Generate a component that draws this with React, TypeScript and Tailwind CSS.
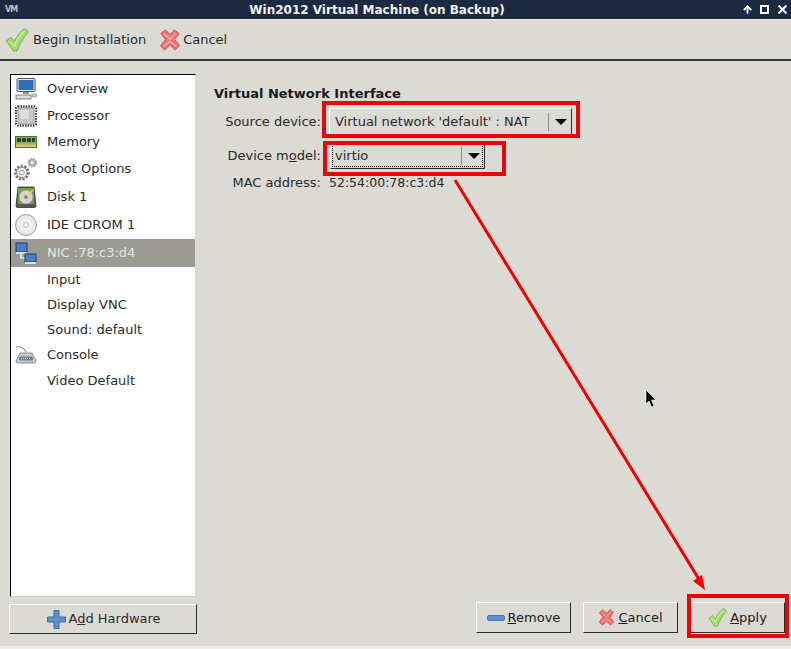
import { ReactNode } from "react";
import { ArrowUp, X } from "lucide-react";

const font = "font-['DejaVu_Sans',sans-serif]";

const CheckIcon = ({ size = 24 }: { size?: number }) => (
    <svg width={size} height={size} viewBox="0 0 24 24">
        <path d="M1 13 L6 9.5 L9.5 13 C12 8 15 4 19.5 0.5 L23.5 4 C18 10 14.5 16 12 23 L8 23 C6 19 3.5 16 1 13 Z" fill="#a2dc6c" stroke="#74b04f" strokeWidth="1" strokeLinejoin="round" />
        <path d="M4 13.5 L9.5 17.5 C12 11 15.5 6.5 20 3" fill="none" stroke="#c8ef9f" strokeWidth="1.4" />
    </svg>
);

const CrossIcon = ({ size = 22 }: { size?: number }) => (
    <svg width={size} height={size} viewBox="0 0 24 24">
        <path d="M2 5 L7 1 L12 6 L17 1 L22 5 L17 11.5 L22.5 18 L17.5 23 L12 17 L6.5 23 L1.5 18.5 L7 11.5 Z" fill="#ec7373" stroke="#c94a4a" strokeWidth="1" strokeLinejoin="round" />
        <path d="M5 5 L12 11 L18 5 M5 19 L12 13.5 L19 19" fill="none" stroke="#f7b0b0" strokeWidth="1.4" />
    </svg>
);

const MonitorIcon = () => (
    <svg width="22" height="22" viewBox="0 0 22 22">
        <rect x="2" y="0.5" width="18" height="13" rx="1" fill="#e8e8e8" stroke="#555" />
        <rect x="3.5" y="2" width="15" height="10" fill="#2f6fb8" />
        <rect x="8" y="14" width="6" height="2" fill="#999" />
        <rect x="1" y="17" width="15" height="4" fill="#ddd" stroke="#666" strokeWidth="0.8" />
        <rect x="17" y="16" width="5" height="3" rx="1" fill="#ccc" stroke="#777" strokeWidth="0.6" />
    </svg>
);

const ChipIcon = () => (
    <svg width="22" height="24" viewBox="0 0 22 24">
        <rect x="1" y="2.5" width="20" height="19" rx="2" fill="none" stroke="#333" strokeWidth="2.4" strokeDasharray="1.4 1.2" />
        <rect x="3" y="4" width="16" height="16" rx="1" fill="#c8c8c6" stroke="#777" strokeWidth="0.6" />
        <rect x="5" y="6" width="9" height="9" fill="#dededc" />
    </svg>
);

const MemoryIcon = () => (
    <svg width="22" height="12" viewBox="0 0 22 12">
        <rect x="0.5" y="0.5" width="21" height="11" fill="#8fae6a" stroke="#4f6b3a" />
        <rect x="2" y="2" width="4" height="4" fill="#2f3f28" />
        <rect x="7" y="2" width="4" height="4" fill="#2f3f28" />
        <rect x="12" y="2" width="4" height="4" fill="#2f3f28" />
        <rect x="17" y="2" width="3" height="4" fill="#2f3f28" />
        <rect x="1" y="8.5" width="20" height="2.5" fill="#d9c66a" />
    </svg>
);

const GearsIcon = () => (
    <svg width="25" height="25" viewBox="0 0 24 24">
        <circle cx="8.5" cy="15" r="6" fill="#f2f2f0" stroke="#777" strokeWidth="3" strokeDasharray="2 1.3" />
        <circle cx="8.5" cy="15" r="5" fill="#f4f4f2" stroke="#777" strokeWidth="0.8" />
        <circle cx="8.5" cy="15" r="2.2" fill="#fff" stroke="#777" strokeWidth="0.8" />
        <circle cx="18.5" cy="5.5" r="3.6" fill="#bbb" stroke="#999" strokeWidth="2" strokeDasharray="1.5 1" />
        <circle cx="18.5" cy="5.5" r="1.4" fill="#eee" />
    </svg>
);

const DiskIcon = () => (
    <svg width="22" height="22" viewBox="0 0 22 22">
        <path d="M3 1 H19 L21 20 Q21 21.5 19.5 21.5 H2.5 Q1 21.5 1 20 Z" fill="#555753" stroke="#333" strokeWidth="0.8" />
        <rect x="3" y="2" width="16" height="16" rx="1" fill="#7ba23f" />
        <circle cx="11" cy="11" r="7" fill="#d5d5d0" stroke="#8a8a85" strokeWidth="0.6" />
        <circle cx="11" cy="11" r="2" fill="#888" />
        <path d="M12 10 L18 4" stroke="#e8d44d" strokeWidth="1.6" />
    </svg>
);

const CdIcon = () => (
    <svg width="22" height="22" viewBox="0 0 22 22">
        <circle cx="11" cy="11" r="10.5" fill="#e6e6e4" stroke="#9a9a98" />
        <circle cx="11" cy="11" r="7" fill="#efefed" />
        <circle cx="11" cy="11" r="2.4" fill="#fff" stroke="#999" strokeWidth="0.7" />
    </svg>
);

const NicIcon = () => (
    <svg width="22" height="22" viewBox="0 0 22 22">
        <path d="M6 10 V16 H12" fill="none" stroke="#eee" strokeWidth="1.5" />
        <rect x="1" y="1" width="11" height="9" fill="#4a7fc4" stroke="#1f3b66" />
        <rect x="1" y="10" width="11" height="2" fill="#ddd" />
        <rect x="10" y="12" width="11" height="8" fill="#4a7fc4" stroke="#1f3b66" />
        <rect x="10" y="20" width="11" height="2" fill="#ddd" />
    </svg>
);

const ConsoleIcon = () => (
    <svg width="22" height="19" viewBox="0 0 22 19">
        <path d="M1 1 C6 0 9 2 11 6" fill="none" stroke="#8a8a88" strokeWidth="1.2" />
        <path d="M5 7 H17 L21 15 Q21 17 19 17 H3 Q1 17 1 15 Z" fill="#c9c9c7" stroke="#777" strokeWidth="0.8" />
        <rect x="4" y="10.5" width="14" height="4" rx="1.5" fill="#6f8296" />
        <path d="M6 12.5 H16" stroke="#dde" strokeWidth="1" strokeDasharray="1 1" />
    </svg>
);

const rows: { label: string; icon?: ReactNode; h: string; selected?: boolean }[] = [
    { label: "Overview", icon: <MonitorIcon />, h: "h-[27px]" },
    { label: "Processor", icon: <ChipIcon />, h: "h-[27px]" },
    { label: "Memory", icon: <MemoryIcon />, h: "h-[26px]" },
    { label: "Boot Options", icon: <GearsIcon />, h: "h-[28px]" },
    { label: "Disk 1", icon: <DiskIcon />, h: "h-[28px]" },
    { label: "IDE CDROM 1", icon: <CdIcon />, h: "h-[28px]" },
    { label: "NIC :78:c3:d4", icon: <NicIcon />, h: "h-[28px]", selected: true },
    { label: "Input", h: "h-[25px]" },
    { label: "Display VNC", h: "h-[25px]" },
    { label: "Sound: default", h: "h-[25px]" },
    { label: "Console", icon: <ConsoleIcon />, h: "h-[26px]" },
    { label: "Video Default", h: "h-[26px]" },
];

const ComboArrow = () => (
    <span className="flex items-center border-l border-l-[#8a8a86] pl-[6px] h-[18px]">
        <span className="w-0 h-0 border-l-[6px] border-r-[6px] border-t-[6px] border-l-transparent border-r-transparent border-t-black" />
    </span>
);

const raised = "border border-t-white border-l-white border-r-[#2b2b2b] border-b-[#2b2b2b] bg-[#dcdad5]";

const ActionButton = ({ icon, first, rest }: { icon: ReactNode; first: string; rest: string }) => (
    <button className={`w-[95px] h-[31px] flex items-center justify-center gap-[3px] text-[13px] text-[#1a1a1a] ${raised}`}>
        {icon}
        <span><span className="underline">{first}</span>{rest}</span>
    </button>
);

const App = () => {
    return (
        <div className={`relative w-[791px] h-[649px] overflow-hidden flex flex-col bg-[#dcdad5] ${font}`}>
            {/* title bar */}
            <div className="h-[19px] flex items-center bg-[#1b2a40] pl-[5px] pr-[2px] shrink-0">
                <span className="w-[12px] text-[8px] leading-none font-bold text-[#b9c0ca] tracking-[-1px]">VM</span>
                <span className="flex-1 text-center pr-[5px] text-[12px] font-bold text-[#f2f2f2]">Win2012 Virtual Machine (on Backup)</span>
                <span className="flex items-center gap-[7px] text-white">
                    <ArrowUp size={11} strokeWidth={4} />
                    <span className="w-[9px] h-[9px] border-2 border-white" />
                    <X size={13} strokeWidth={4} />
                </span>
            </div>

            {/* toolbar */}
            <div className="h-[42px] shrink-0 flex items-center border-b-2 border-b-[#3a3a38] border-t border-t-[#f2f1ee] pl-[5px] text-[13px] text-[#2a2a2a]">
                <CheckIcon />
                <span className="ml-[4px]">Begin Installation</span>
                <span className="ml-[13px]"><CrossIcon /></span>
                <span className="ml-[2px]">Cancel</span>
            </div>

            {/* body */}
            <div className="flex-1 flex min-h-0 pt-[13px] pb-[12px]">
                <div className="w-[188px] ml-[9px] flex flex-col shrink-0">
                    <div className="flex-1 ml-[1px] w-[186px] bg-white border border-t-black border-l-black border-r-[#dcdad5] border-b-[#d0cec9] text-[13px] text-[#2a2a2a]">
                        {rows.map((row) => (
                            <div key={row.label} className={`flex items-center ${row.h} ${row.selected ? "bg-[#9c9a94] text-[#e8e8e6]" : ""}`}>
                                <span className="w-[29px] flex justify-center">{row.icon}</span>
                                <span className="ml-[7px]">{row.label}</span>
                            </div>
                        ))}
                    </div>
                    <button className={`mt-[7px] h-[30px] pl-[2px] flex items-center justify-center gap-[2px] text-[13px] text-[#2a2a2a] ${raised}`}>
                        <svg width="19" height="19" viewBox="0 0 19 19">
                            <path d="M7 0.5 H12 V7 H18.5 V12 H12 V18.5 H7 V12 H0.5 V7 H7 Z" fill="#5f8fcf" stroke="#3f6aa5" />
                        </svg>
                        <span>A<span className="underline">d</span>d Hardware</span>
                    </button>
                </div>

                <div className="flex-1 flex flex-col pl-[17px] pr-[6px]">
                    <h2 className="text-[13px] font-bold text-[#1a1a1a] mt-[12px] leading-[16px]">Virtual Network Interface</h2>
                    <div className="mt-[6px] grid grid-cols-[107px_auto] justify-start items-center text-[13px] text-[#2a2a2a] gap-y-[7px]">
                        <span className="text-right">Source device:</span>
                        <div className={`ml-[8px] w-[243px] h-[27px] flex items-center justify-between pl-[5px] pr-[4px] ${raised}`}>
                            <span>Virtual network 'default' : NAT</span>
                            <ComboArrow />
                        </div>
                        <span className="text-right">Device m<span className="underline">o</span>del:</span>
                        <div className={`ml-[9px] w-[155px] h-[27px] p-[1px] ${raised}`}>
                            <div className="h-full flex items-center justify-between pl-[2px] pr-[2px] border border-dotted border-black">
                                <span>virtio</span>
                                <ComboArrow />
                            </div>
                        </div>
                    </div>
                    <div className="mt-[5px] flex text-[13px] text-[#2a2a2a] leading-[18px]">
                        <span className="w-[107px] text-right">MAC address:</span>
                        <span className="ml-[8px] text-[12.5px]">52:54:00:78:c3:d4</span>
                    </div>
                    <div className="mt-auto flex justify-end gap-[12px] mb-[1px]">
                        <ActionButton
                            icon={<span className="w-[18px] h-[6px] rounded-[2px] bg-[#5f8fcf] border border-[#4a76b0]" />}
                            first="R"
                            rest="emove"
                        />
                        <ActionButton icon={<CrossIcon size={17} />} first="C" rest="ancel" />
                        <ActionButton icon={<CheckIcon size={19} />} first="A" rest="pply" />
                    </div>
                </div>
            </div>

            {/* window bottom edge */}
            <div className="h-[3px] shrink-0 bg-[#eeedea]" />

            {/* red annotations drawn on the screenshot */}
            <div className="absolute left-[322px] top-[101px] w-[258px] h-[37px] border-4 border-[#e60808]" />
            <div className="absolute left-[323px] top-[141px] w-[183px] h-[35px] border-4 border-[#e60808]" />
            <div className="absolute left-[687px] top-[594px] w-[102px] h-[44px] border-4 border-[#e60808]" />
            <svg className="absolute left-0 top-0 pointer-events-none" width="791" height="649">
                <line x1="455" y1="180" x2="700" y2="581" stroke="#f00000" strokeWidth="3" />
                <path d="M705 590 L693 581 L702 575 Z" fill="#f00000" />
                <path d="M646 390 V404 L649 401 L651.5 407 L654 406 L651.5 400 L656 400 Z" fill="#000" stroke="#fff" strokeWidth="0.6" />
            </svg>
        </div>
    );
};

export default App;
